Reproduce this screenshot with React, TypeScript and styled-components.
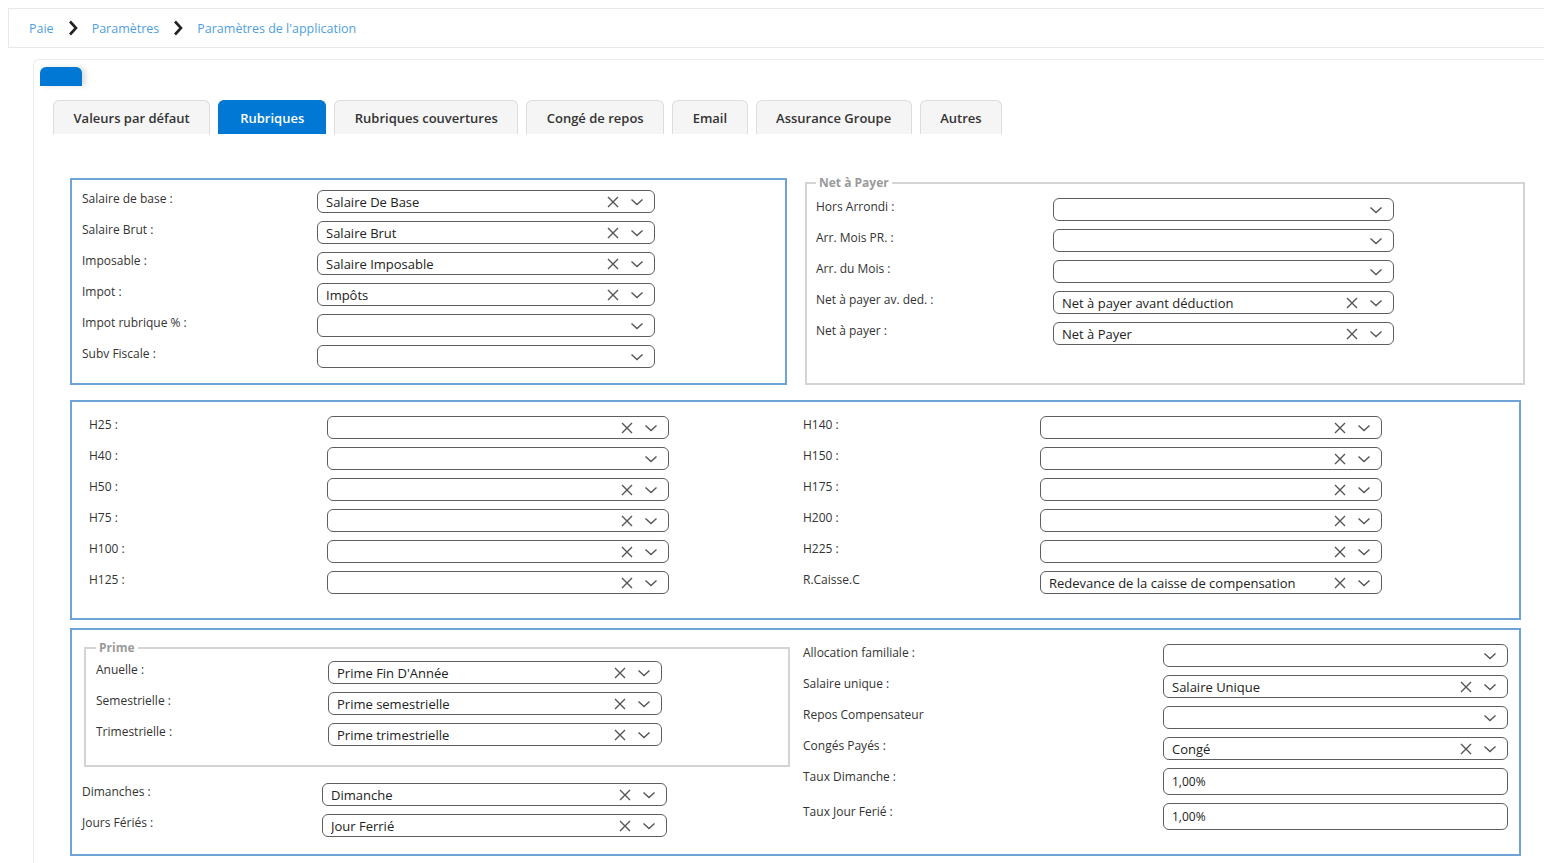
import React from "react";
import styled, { createGlobalStyle } from "styled-components";

const GlobalStyle = createGlobalStyle`
  html { overflow: hidden; }
  body {
    margin: 8px 0 0 8px;
    background: #ffffff;
    font-family: "Open Sans", "Noto Sans", sans-serif;
    color: #333333;
  }
  * { box-sizing: border-box; }
`;

// Fil d'ariane
const Breadcrumb = styled.nav`
  height: 40px;
  width: calc(100% + 4px);
  border: 1px solid #e8e8e8;
  display: flex;
  align-items: center;
  padding-left: 20px;
  gap: 14px;
`;

const Crumb = styled.span`
  font-size: 12.5px;
  color: #4f9fe0;
`;

const Card = styled.div`
  margin: 11px 0 0 25px;
  border: 1px solid #ececec;
  border-right: none;
  border-radius: 6px 0 0 0;
  padding: 7px 0 0 0;
  height: 900px;
`;

const Stub = styled.div`
  width: 42px;
  height: 19px;
  margin-left: 6px;
  background: #0078d4;
  border-radius: 6px 6px 0 0;
  box-shadow: 4px 0 5px rgba(0, 0, 0, 0.12);
`;

const TabBar = styled.div`
  display: flex;
  gap: 8px;
  margin: 14px 0 0 19px;
`;

const Tab = styled.div<{ $active?: boolean }>`
  height: 34px;
  padding: 0 ${(p) => (p.$active ? 21 : 19.5)}px;
  display: flex;
  align-items: center;
  font-size: 13px;
  font-weight: 600;
  border: 1px solid ${(p) => (p.$active ? "#0078d4" : "#dddddd")};
  border-bottom: none;
  border-radius: 6px 6px 0 0;
  background: ${(p) => (p.$active ? "#0078d4" : "#f5f5f5")};
  color: ${(p) => (p.$active ? "#ffffff" : "#333333")};
`;

const Content = styled.div`
  padding: 42px 0 0 36px;
  display: flex;
  flex-direction: column;
`;

const TopRow = styled.div`
  display: grid;
  grid-template-columns: 717px 720px;
  column-gap: 18px;
  align-items: end;
`;

const BlueBox = styled.div<{ $pad: string; $gap?: number }>`
  border: 2px solid #6ea3d8;
  padding: ${(p) => p.$pad};
  margin-top: ${(p) => p.$gap ?? 0}px;
`;

const WideBox = styled(BlueBox)`
  width: 1451px;
`;

const GreyFieldset = styled.fieldset<{ $pad: string }>`
  margin: 0;
  border: 2px solid #d4d4d4;
  padding: ${(p) => p.$pad};
  min-width: 0;
`;

const Legend = styled.legend`
  padding: 0 3px;
  font-size: 12px;
  font-weight: 700;
  line-height: 14px;
  color: #9a9a9a;
`;

const Rows = styled.div`
  display: flex;
  flex-direction: column;
  gap: 8px;
`;

const Row = styled.div<{ $label: number; $field: number }>`
  display: grid;
  grid-template-columns: ${(p) => `${p.$label}px ${p.$field}px`};
  align-items: start;
`;

const Label = styled.label`
  font-size: 12px;
  line-height: 16px;
  padding-top: 1px;
  color: #333333;
  white-space: nowrap;
`;

const TwoCols = styled.div<{ $left: number }>`
  display: grid;
  grid-template-columns: ${(p) => p.$left}px 1fr;
  align-items: start;
`;

const SelectBox = styled.div`
  height: 23px;
  border: 1px solid #5e5e5e;
  border-radius: 6px;
  display: flex;
  align-items: center;
  padding: 0 10px 0 8px;
  background: #ffffff;
`;

const SelectValue = styled.span`
  flex: 1;
  font-size: 13px;
  color: #222222;
  white-space: nowrap;
  overflow: hidden;
`;

const Indicators = styled.div`
  display: flex;
  align-items: center;
  gap: 11px;
`;

const TextInput = styled.div`
  height: 27px;
  border: 1px solid #5e5e5e;
  border-radius: 6px;
  display: flex;
  align-items: center;
  padding: 0 8px;
  font-size: 12px;
  color: #222222;
`;

const PrimeBlock = styled.div`
  display: flex;
  flex-direction: column;
  gap: 16px;
`;

const PrimeFieldset = styled(GreyFieldset)`
  width: 706px;
  margin-left: 2px;
`;

const OtherCol = styled.div`
  padding-top: 3px;
`;

const Chevron = () => (
  <svg width="14" height="8" viewBox="0 0 14 8">
    <polyline points="1.5,1.5 7,6.5 12.5,1.5" fill="none" stroke="#555" strokeWidth="1.4" />
  </svg>
);

const ClearIcon = () => (
  <svg width="12" height="12" viewBox="0 0 12 12">
    <path d="M1 1 L11 11 M11 1 L1 11" stroke="#555" strokeWidth="1.4" fill="none" />
  </svg>
);

const CrumbArrow = () => (
  <svg width="10" height="16" viewBox="0 0 10 16">
    <polyline points="2,1.5 8,8 2,14.5" fill="none" stroke="#222" strokeWidth="2.6" />
  </svg>
);

type SelectProps = { value?: string; clear?: boolean };

const Select: React.FC<SelectProps> = ({ value = "", clear }) => (
  <SelectBox>
    <SelectValue>{value}</SelectValue>
    <Indicators>
      {clear && <ClearIcon />}
      <Chevron />
    </Indicators>
  </SelectBox>
);

type Field = { label: string; value?: string; clear?: boolean; input?: boolean };

const FieldRows: React.FC<{ fields: Field[]; label: number; field: number }> = ({
  fields,
  label,
  field,
}) => (
  <Rows>
    {fields.map((f) => (
      <Row key={f.label} $label={label} $field={field}>
        <Label>{f.label}</Label>
        {f.input ? <TextInput>{f.value}</TextInput> : <Select value={f.value} clear={f.clear} />}
      </Row>
    ))}
  </Rows>
);

const baseFields: Field[] = [
  { label: "Salaire de base :", value: "Salaire De Base", clear: true },
  { label: "Salaire Brut :", value: "Salaire Brut", clear: true },
  { label: "Imposable :", value: "Salaire Imposable", clear: true },
  { label: "Impot :", value: "Impôts", clear: true },
  { label: "Impot rubrique % :" },
  { label: "Subv Fiscale :" },
];

const netFields: Field[] = [
  { label: "Hors Arrondi :" },
  { label: "Arr. Mois PR. :" },
  { label: "Arr. du Mois :" },
  { label: "Net à payer av. ded. :", value: "Net à payer avant déduction", clear: true },
  { label: "Net à payer :", value: "Net à Payer", clear: true },
];

const hoursLeft: Field[] = [
  { label: "H25 :", clear: true },
  { label: "H40 :" },
  { label: "H50 :", clear: true },
  { label: "H75 :", clear: true },
  { label: "H100 :", clear: true },
  { label: "H125 :", clear: true },
];

const hoursRight: Field[] = [
  { label: "H140 :", clear: true },
  { label: "H150 :", clear: true },
  { label: "H175 :", clear: true },
  { label: "H200 :", clear: true },
  { label: "H225 :", clear: true },
  { label: "R.Caisse.C", value: "Redevance de la caisse de compensation", clear: true },
];

const primeFields: Field[] = [
  { label: "Anuelle :", value: "Prime Fin D'Année", clear: true },
  { label: "Semestrielle :", value: "Prime semestrielle", clear: true },
  { label: "Trimestrielle :", value: "Prime trimestrielle", clear: true },
];

const dayFields: Field[] = [
  { label: "Dimanches :", value: "Dimanche", clear: true },
  { label: "Jours Fériés :", value: "Jour Ferrié", clear: true },
];

const otherFields: Field[] = [
  { label: "Allocation familiale :" },
  { label: "Salaire unique :", value: "Salaire Unique", clear: true },
  { label: "Repos Compensateur" },
  { label: "Congés Payés :", value: "Congé", clear: true },
  { label: "Taux Dimanche :", value: "1,00%", input: true },
  { label: "Taux Jour Ferié :", value: "1,00%", input: true },
];

const tabs = [
  "Valeurs par défaut",
  "Rubriques",
  "Rubriques couvertures",
  "Congé de repos",
  "Email",
  "Assurance Groupe",
  "Autres",
];

const App: React.FC = () => {
  return (
    <>
      <GlobalStyle />
      <Breadcrumb>
        <Crumb>Paie</Crumb>
        <CrumbArrow />
        <Crumb>Paramètres</Crumb>
        <CrumbArrow />
        <Crumb>Paramètres de l'application</Crumb>
      </Breadcrumb>
      <Card>
        <Stub />
        <TabBar>
          {tabs.map((t) => (
            <Tab key={t} $active={t === "Rubriques"}>
              {t}
            </Tab>
          ))}
        </TabBar>
        <Content>
          {/* Rubriques de base et Net à payer */}
          <TopRow>
            <BlueBox $pad="10px 10px 15px 10px">
              <FieldRows fields={baseFields} label={235} field={338} />
            </BlueBox>
            <GreyFieldset $pad="8px 9px 38px 9px">
              <Legend>Net à Payer</Legend>
              <FieldRows fields={netFields} label={237} field={341} />
            </GreyFieldset>
          </TopRow>

          {/* Heures supplémentaires */}
          <WideBox $pad="14px 17px 24px 17px" $gap={15}>
            <TwoCols $left={714}>
              <FieldRows fields={hoursLeft} label={238} field={342} />
              <FieldRows fields={hoursRight} label={237} field={342} />
            </TwoCols>
          </WideBox>

          {/* Primes et congés */}
          <WideBox $pad="11px 10px 17px 10px" $gap={8}>
            <TwoCols $left={721}>
              <PrimeBlock>
                <PrimeFieldset $pad="6px 10px 19px 10px">
                  <Legend>Prime</Legend>
                  <FieldRows fields={primeFields} label={232} field={334} />
                </PrimeFieldset>
                <FieldRows fields={dayFields} label={240} field={345} />
              </PrimeBlock>
              <OtherCol>
                <FieldRows fields={otherFields} label={360} field={345} />
              </OtherCol>
            </TwoCols>
          </WideBox>
        </Content>
      </Card>
    </>
  );
};

export default App;
